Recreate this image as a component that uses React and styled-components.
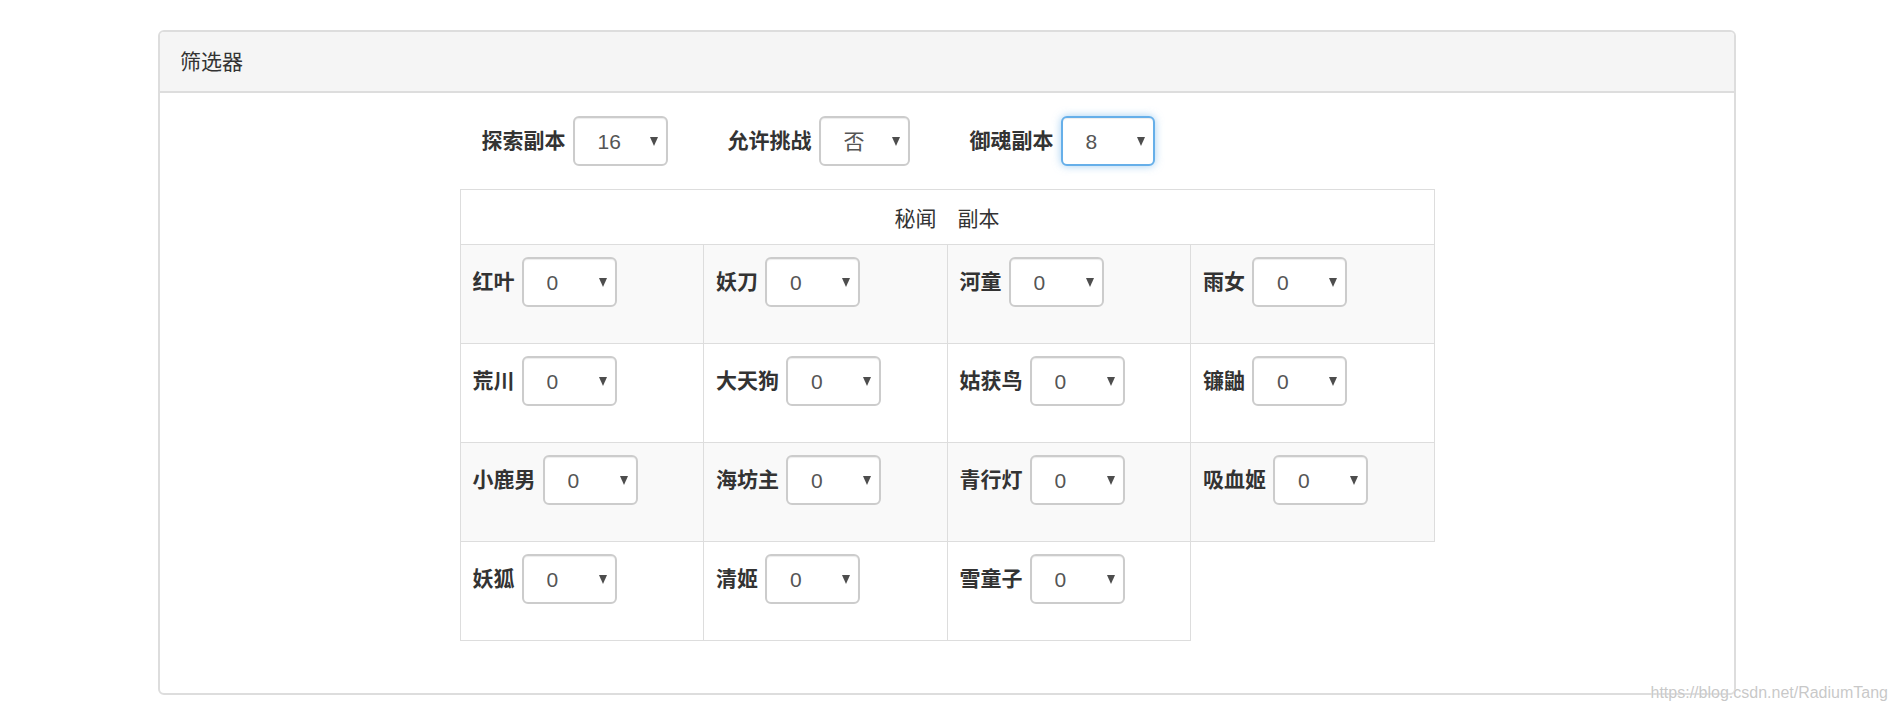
import React from 'react';
import styled, { createGlobalStyle, css } from 'styled-components';

const GlobalStyle = createGlobalStyle`
  html, body {
    margin: 0;
    padding: 0;
    background: #fff;
  }
  body {
    font-family: "Liberation Sans", "Noto Sans CJK SC", sans-serif;
    font-size: 21px;
    color: #333;
  }
  * {
    box-sizing: border-box;
  }
`;

// 상단 필터 항목
const topFilters = [
  { label: '探索副本', value: '16', width: 95 },
  { label: '允许挑战', value: '否', width: 91 },
  { label: '御魂副本', value: '8', width: 94, focused: true },
];

// 秘闻副本 목록 (한 줄에 4개)
const dungeonRows = [
  ['红叶', '妖刀', '河童', '雨女'],
  ['荒川', '大天狗', '姑获鸟', '镰鼬'],
  ['小鹿男', '海坊主', '青行灯', '吸血姬'],
  ['妖狐', '清姬', '雪童子'],
];

const Select = ({ value, width, focused }) => (
  <SelectBox $width={width} $focused={focused}>
    <select defaultValue={value}>
      <option value={value}>{value}</option>
    </select>
  </SelectBox>
);

const App = () => {
  return (
    <Page>
      <GlobalStyle />
      <Panel>
        <PanelHeading>筛选器</PanelHeading>
        <PanelBody>
          <Content>
            <FormRow>
              {topFilters.map(item => (
                <FormGroup key={item.label}>
                  <Label>{item.label}</Label>
                  <Select value={item.value} width={item.width} focused={item.focused} />
                </FormGroup>
              ))}
            </FormRow>

            <Table>
              <thead>
                <tr>
                  <HeadCell colSpan={4}>秘闻　副本</HeadCell>
                </tr>
              </thead>
              <tbody>
                {dungeonRows.map((row, idx) => (
                  <Row key={idx} $striped={idx % 2 === 0}>
                    {row.map(name => (
                      <Cell key={name}>
                        <FormGroup>
                          <Label>{name}</Label>
                          <Select value="0" width={95} />
                        </FormGroup>
                      </Cell>
                    ))}
                  </Row>
                ))}
              </tbody>
            </Table>
          </Content>
        </PanelBody>
      </Panel>
      <Watermark>https://blog.csdn.net/RadiumTang</Watermark>
    </Page>
  );
};

const Page = styled.div`
  position: relative;
  height: 712px;
  padding-top: 30px;
  overflow: hidden;
`;

const Panel = styled.div`
  width: 1578px;
  margin-left: 158px;
  border: 2px solid #ddd;
  border-radius: 6px;
  background: #fff;
  overflow: hidden;
`;

const PanelHeading = styled.div`
  height: 61px;
  padding: 0 20px;
  display: flex;
  align-items: center;
  background: #f5f5f5;
  border-bottom: 2px solid #ddd;
  font-size: 21px;
  line-height: 30px;
  color: #333;
`;

const PanelBody = styled.div`
  padding: 23px 22px 52px;
`;

const Content = styled.div`
  width: 975px;
  margin: 0 auto;
`;

const FormRow = styled.div`
  display: flex;
  align-items: center;
  gap: 60px;
  padding-left: 22px;
  margin-bottom: 23px;
`;

const FormGroup = styled.div`
  display: flex;
  align-items: center;
  gap: 7px;
`;

const Label = styled.label`
  font-size: 21px;
  font-weight: 700;
  line-height: 30px;
  color: #333;
  white-space: nowrap;
`;

const SelectBox = styled.div`
  position: relative;
  width: ${props => props.$width}px;
  height: 50px;
  border: 2px solid #ccc;
  border-radius: 6px;
  background: #fff;
  box-shadow: inset 0 1px 1px rgba(0, 0, 0, 0.075);

  ${props =>
    props.$focused &&
    css`
      border-color: #66afe9;
      box-shadow: inset 0 1px 1px rgba(0, 0, 0, 0.075), 0 0 8px rgba(102, 175, 233, 0.6);
    `}

  select {
    appearance: none;
    -webkit-appearance: none;
    width: 100%;
    height: 100%;
    border: none;
    outline: none;
    background: transparent;
    padding: 0 0 0 23px;
    font-family: "Liberation Sans", "Noto Sans CJK SC", sans-serif;
    font-size: 21px;
    color: #555;
  }

  &::after {
    content: '';
    position: absolute;
    right: 8px;
    top: 50%;
    margin-top: -4px;
    border-left: 4.5px solid transparent;
    border-right: 4.5px solid transparent;
    border-top: 9px solid #4d4d4d;
    pointer-events: none;
  }
`;

const Table = styled.table`
  width: 975px;
  table-layout: fixed;
  border-collapse: collapse;
  margin: 0;
`;

const HeadCell = styled.th`
  height: 55px;
  padding: 0;
  border: 1px solid #ddd;
  text-align: center;
  font-weight: 400;
  font-size: 21px;
  color: #333;
`;

const Row = styled.tr`
  background: ${props => (props.$striped ? '#f9f9f9' : '#fff')};
`;

const Cell = styled.td`
  border: 1px solid #ddd;
  padding: 12px 12px 36px;
  vertical-align: top;
`;

const Watermark = styled.div`
  position: absolute;
  right: 9px;
  bottom: 11px;
  font-family: "Liberation Sans", Arial, sans-serif;
  font-size: 16px;
  line-height: 17px;
  color: rgba(190, 190, 190, 0.85);
  text-shadow: 0 0 1px #fff;
`;

export default App;
